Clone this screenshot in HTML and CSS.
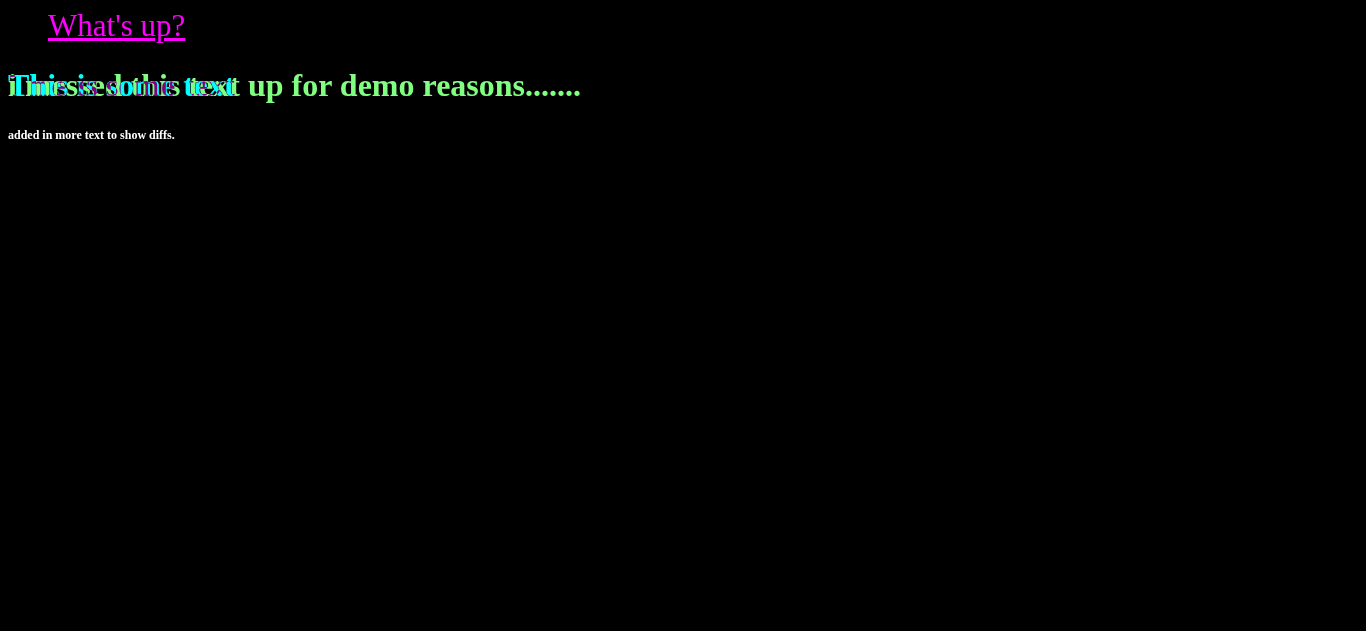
FILE: index.html
```
<!DOCTYPE html>
<html lang="en">
<head>
<meta charset="utf-8">
<title>What's up?</title>
<link rel="stylesheet" href="styles.css">
</head>
<body>
<p class="greeting"><a class="greeting-link" href="#">What's up?</a></p>
<div class="overlap">
<h1 class="title title-under">i messed this text up for demo reasons.......</h1>
<h1 class="title title-over">This is some text</h1>
</div>
<h6 class="note">added in more text to show diffs.</h6>
</body>
</html>
```

FILE: styles.css
```
body {
  margin: 8px;
  background: #000;
  color: #fff;
  font-family: "Liberation Serif", "Times New Roman", serif;
}
.greeting {
  margin: 0 40px;
  font-size: 31px;
  line-height: 36px;
}
.greeting-link {
  color: #f0f;
  text-decoration-thickness: 3px;
}
.overlap {
  display: grid;
  margin: 23px 0;
}
.title {
  grid-area: 1 / 1;
  margin: 0;
  font-size: 32px;
  line-height: 37px;
}
.title-under {
  color: #80ff80;
}
.title-over {
  color: #0ff;
  mix-blend-mode: difference;
}
.note {
  margin: 24px 0;
  font-size: 12px;
}
```
